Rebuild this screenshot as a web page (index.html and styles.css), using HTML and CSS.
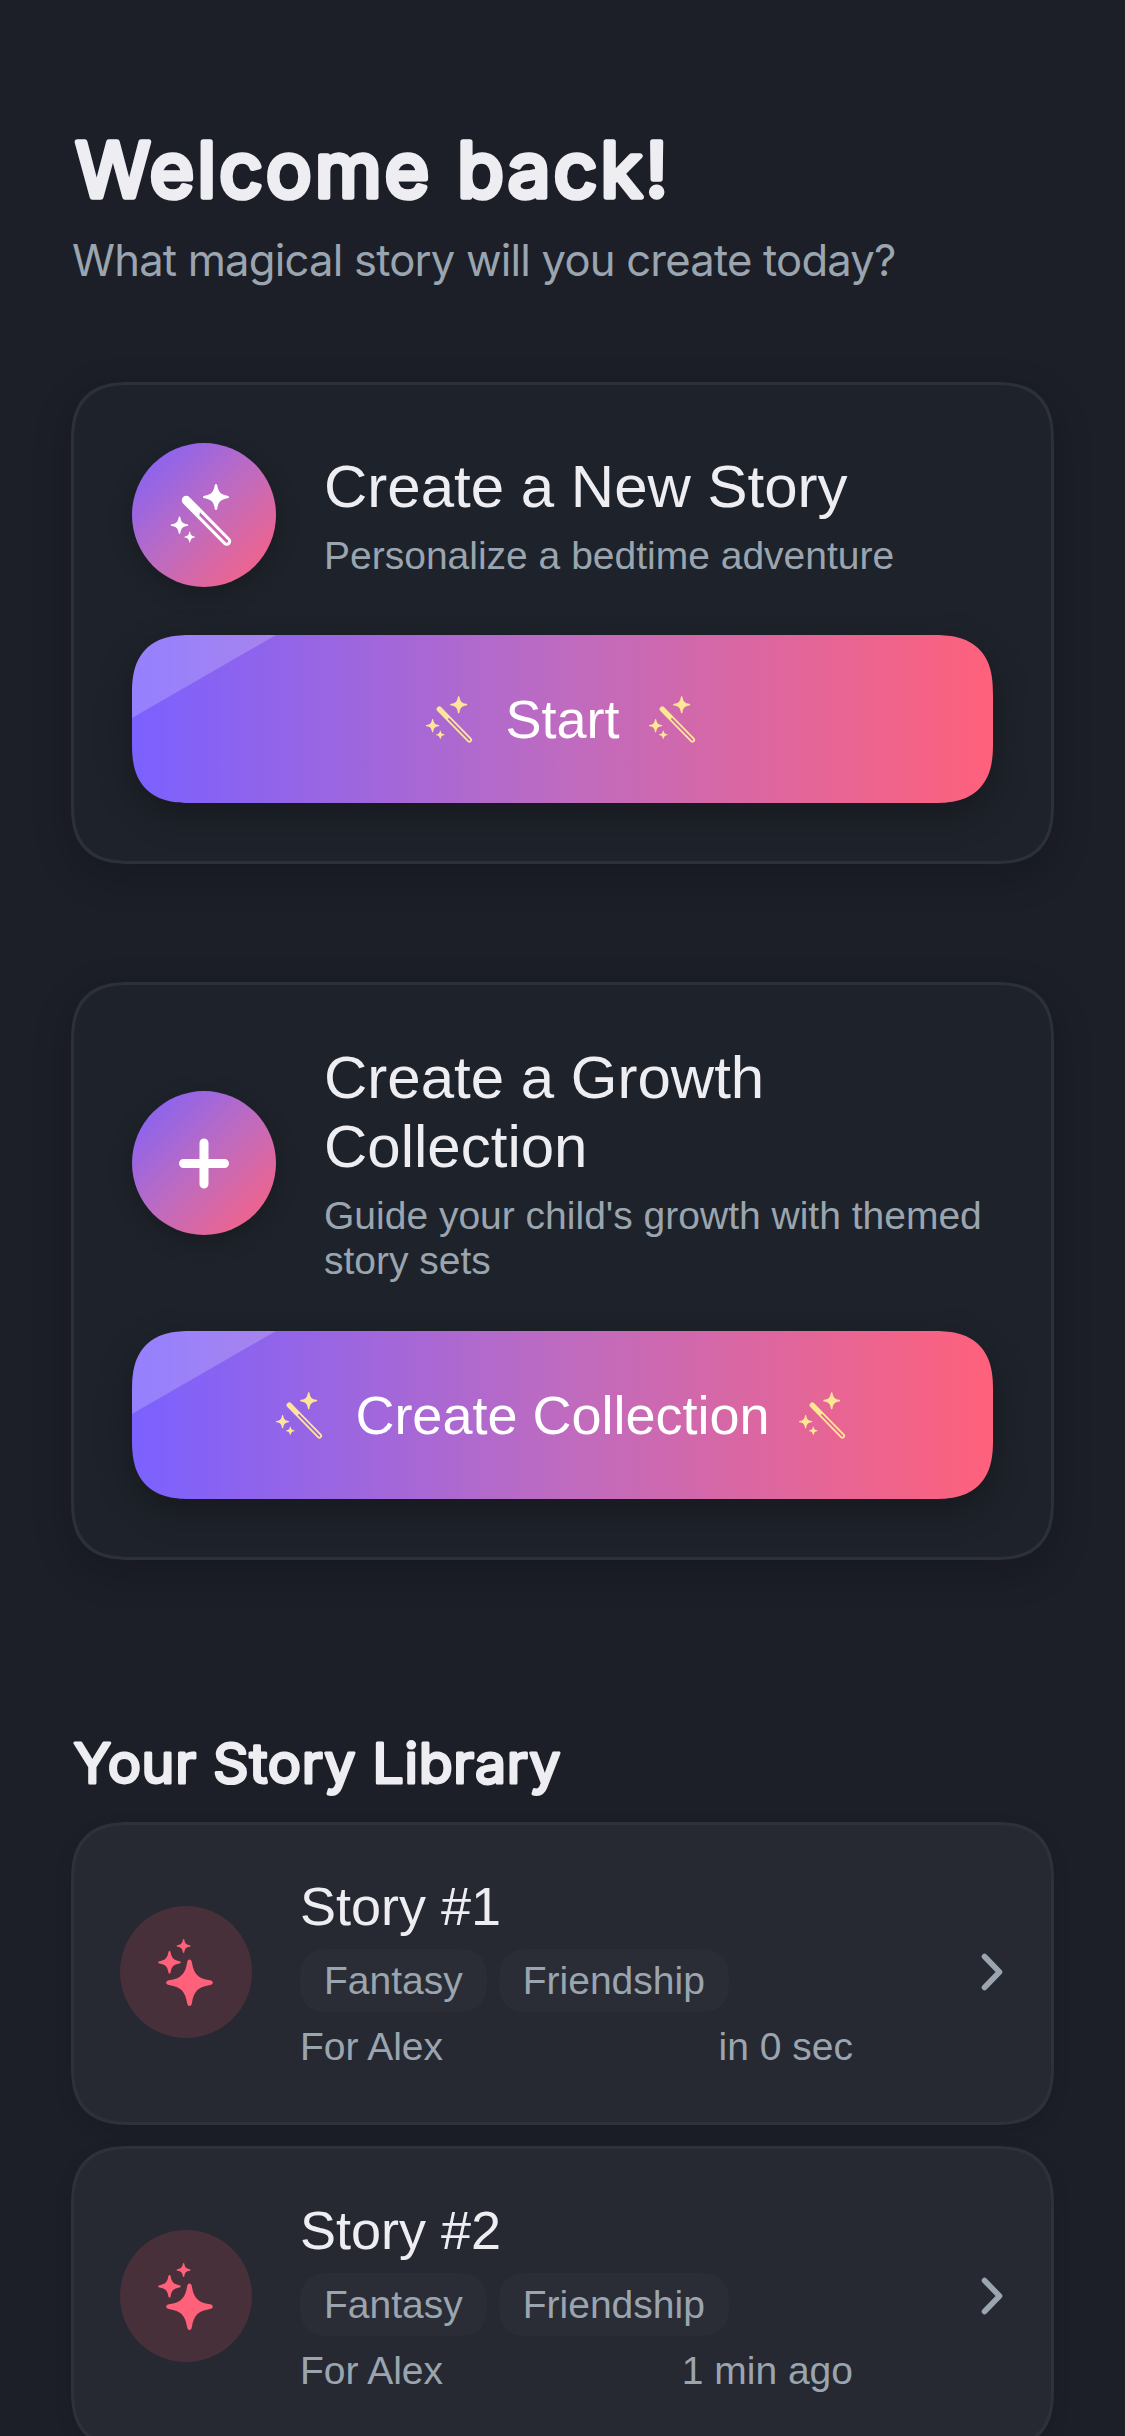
FILE: index.html
```html
<!DOCTYPE html>
<html lang="en">
<head>
<meta charset="utf-8">
<title>Stories</title>
<link rel="stylesheet" href="styles.css">
</head>
<body>
<svg class="defs" aria-hidden="true">
  <symbol id="star" viewBox="-10 -10 20 20" overflow="visible">
    <path d="M0-10C.6-10 .9-9.4 1-8.8C1.9-3.6 3.6-1.9 8.8-1C9.4-.9 10-.6 10 0C10 .6 9.4.9 8.8 1C3.6 1.9 1.9 3.6 1 8.8C.9 9.4.6 10 0 10C-.6 10-.9 9.4-1 8.8C-1.9 3.6-3.6 1.9-8.8 1C-9.4.9-10 .6-10 0C-10-.6-9.4-.9-8.8-1C-3.6-1.9-1.9-3.6-1-8.8C-.9-9.4-.6-10 0-10z"/>
  </symbol>
  <symbol id="wand-small" viewBox="0 -2 50 50">
    <use href="#star" x="24.2" y=".2" width="17" height="17"/>
    <use href="#star" x="-.1" y="23" width="13.4" height="13.4"/>
    <use href="#star" x="10" y="34.4" width="8.6" height="8.6"/>
    <path fill-rule="evenodd" transform="translate(13.3 13.2) rotate(45.6)" d="M0-2.7H43a2.7 2.7 0 0 1 0 5.4H0a2.7 2.7 0 0 1 0-5.4zM13-.9H43a.9.9 0 0 1 0 1.8H13z"/>
  </symbol>
  <symbol id="wand" viewBox="0 0 144 144">
    <use href="#star" x="71" y="41" width="26" height="26"/>
    <use href="#star" x="38.8" y="73.5" width="17.4" height="17.4"/>
    <use href="#star" x="52.3" y="88.6" width="10.8" height="10.8"/>
    <path fill-rule="evenodd" transform="translate(54.3 57.3) rotate(45.4)" d="M0-4.5H57.6a4.5 4.5 0 0 1 0 9H0a4.5 4.5 0 0 1 0-9zM18-1.4H57.6a1.4 1.4 0 0 1 0 2.8H20z"/>
  </symbol>
  <symbol id="sparkles" viewBox="0 0 132 132">
    <use href="#star" x="46.2" y="53.4" width="46.6" height="46.6"/>
    <use href="#star" x="38.2" y="45" width="22.6" height="22.6"/>
    <use href="#star" x="56.6" y="33" width="14" height="14"/>
  </symbol>
  <symbol id="chevron" viewBox="0 0 24 40">
    <path d="M3.5 4.5 18.5 20 3.5 35.5" fill="none" stroke="currentColor" stroke-width="5.6" stroke-linecap="round" stroke-linejoin="round"/>
  </symbol>
</svg>

<main class="screen">
  <header class="hero">
    <h1><svg class="rounded rounded-xl" width="700" height="113"><text x="4.5" y="77" textLength="592">Welcome back!</text></svg></h1>
    <p class="lead">What magical story will you create today?</p>
  </header>

  <section class="card">
    <div class="card-head">
      <span class="badge"><svg><use href="#wand"/></svg></span>
      <div class="card-text">
        <h2>Create a New Story</h2>
        <p>Personalize a bedtime adventure</p>
      </div>
    </div>
    <button class="cta"><svg class="cta-icon"><use href="#wand-small"/></svg>Start<svg class="cta-icon"><use href="#wand-small"/></svg></button>
  </section>

  <section class="card">
    <div class="card-head">
      <span class="badge"><svg viewBox="0 0 144 144"><path class="plus" d="M72 52v41M51.5 72.5h41"/></svg></span>
      <div class="card-text">
        <h2>Create a Growth Collection</h2>
        <p>Guide your child's growth with themed story sets</p>
      </div>
    </div>
    <button class="cta"><svg class="cta-icon"><use href="#wand-small"/></svg>Create Collection<svg class="cta-icon"><use href="#wand-small"/></svg></button>
  </section>

  <section class="library">
    <h2><svg class="rounded rounded-md" width="600" height="78"><text x="2.5" y="60" textLength="487">Your Story Library</text></svg></h2>
    <article class="story">
      <span class="story-badge"><svg><use href="#sparkles"/></svg></span>
      <div class="story-info">
        <h3>Story #1</h3>
        <div class="tags"><span>Fantasy</span><span>Friendship</span></div>
        <div class="meta"><span>For Alex</span><span>in 0 sec</span></div>
      </div>
      <svg class="chevron"><use href="#chevron"/></svg>
    </article>
    <article class="story">
      <span class="story-badge"><svg><use href="#sparkles"/></svg></span>
      <div class="story-info">
        <h3>Story #2</h3>
        <div class="tags"><span>Fantasy</span><span>Friendship</span></div>
        <div class="meta"><span>For Alex</span><span>1 min ago</span></div>
      </div>
      <svg class="chevron"><use href="#chevron"/></svg>
    </article>
  </section>
</main>
</body>
</html>
```
FILE: styles.css
```css
* { box-sizing: border-box; margin: 0; padding: 0; }

body {
  background: #1c1f28;
  color: #eeeef2;
  font-family: "Liberation Sans", Arial, sans-serif;
}

h1, h2, h3 { font-weight: 400; }
svg { display: block; fill: currentColor; }
.defs { position: absolute; width: 0; height: 0; }

.screen {
  width: 1125px;
  height: 2436px;
  overflow: hidden;
  padding: 120px 71px 0;
}

/* Headings with soft, round stroke ends */
.rounded {
  overflow: visible;
  font-family: Inter, sans-serif;
  font-weight: 400;
  stroke: currentColor;
  stroke-linejoin: round;
}
.rounded-xl { font-size: 76px; stroke-width: 5.5px; }
.rounded-md { font-size: 55.5px; stroke-width: 3px; }

.hero { height: 262px; }
.lead {
  color: #9aa5af;
  font: 400 43.6px/56px Inter, sans-serif;
  letter-spacing: -0.8px;
  padding-left: 1px;
  white-space: nowrap;
}

.card {
  border: 3px solid #2c303a;
  border-radius: 50px;
  background: #1e222a;
  box-shadow: 0 12px 36px rgba(12, 7, 18, .26);
  padding: 58px;
  margin-bottom: 118px;
}
.card-head {
  display: flex;
  align-items: center;
  gap: 48px;
  margin-bottom: 48px;
}
.badge {
  flex: none;
  width: 144px;
  height: 144px;
  border-radius: 50%;
  background: linear-gradient(135deg, #7b61ff, #be6bc0 50%, #ff617b);
  box-shadow: 0 6px 24px rgba(0, 0, 0, .22);
  color: #fff;
}
.badge svg { width: 144px; height: 144px; }
.plus { fill: none; stroke: #fff; stroke-width: 9px; stroke-linecap: round; }
.card-text h2 { font-size: 60px; line-height: 69px; margin-bottom: 12px; }
.card-text p { font-size: 39px; line-height: 45px; color: #9aa5af; }

.cta {
  position: relative;
  display: flex;
  align-items: center;
  justify-content: center;
  gap: 29.5px;
  width: 861px;
  height: 168px;
  border: 0;
  border-radius: 49px;
  background: linear-gradient(90deg, #7b61ff, #be6bc0 50%, #ff617b);
  box-shadow: 0 12px 36px rgba(0, 0, 0, .28);
  color: #fff;
  font: 54px/62px "Liberation Sans", Arial, sans-serif;
  overflow: hidden;
}
/* Glossy corner */
.cta::before {
  content: "";
  position: absolute;
  left: 0;
  top: 0;
  width: 144px;
  height: 83px;
  background: rgba(255, 255, 255, .2);
  clip-path: polygon(0 0, 100% 0, 0 100%);
}
.cta-icon { width: 50px; height: 50px; color: #ffe596; }

.library { display: flex; flex-direction: column; gap: 21px; padding-top: 45px; }
.library h2 { height: 78px; }

.story {
  display: flex;
  align-items: center;
  height: 303px;
  border: 3px solid #2e313b;
  border-radius: 50px;
  background: #262932;
  box-shadow: 0 6px 18px rgba(0, 0, 0, .1);
  padding: 0 46px 3px;
}
.story-badge {
  flex: none;
  width: 132px;
  height: 132px;
  border-radius: 50%;
  background: #48303b;
  color: #ff617b;
}
.story-badge svg { width: 132px; height: 132px; }
.story-info { width: 553px; margin-left: 48px; color: #9aa5af; font-size: 39px; line-height: 45px; }
.story-info h3 { color: #eeeef2; font-size: 54px; line-height: 62px; }
.tags { display: flex; gap: 12px; margin: 12px 0; }
.tags span { background: #2a2c36; border-radius: 26px; padding: 9px 24px; }
.meta { display: flex; justify-content: space-between; }
.chevron { width: 24px; height: 40px; margin-left: auto; color: #9aa5af; }

@supports (corner-shape: superellipse(1.38)) {
  .card, .story, .cta { border-radius: 60px; corner-shape: superellipse(1.38); }
  .tags span { border-radius: 30px; corner-shape: superellipse(1.38); }
}
```
